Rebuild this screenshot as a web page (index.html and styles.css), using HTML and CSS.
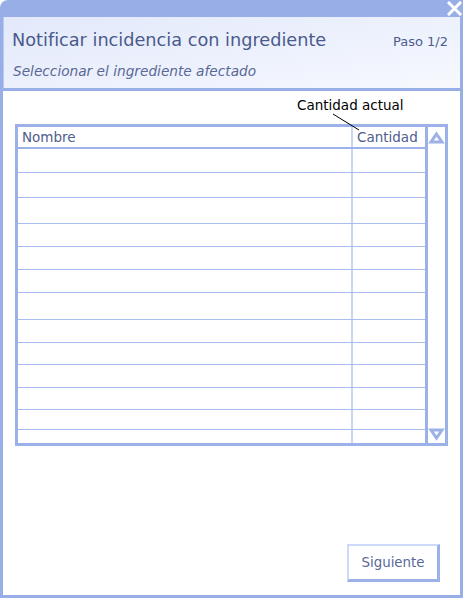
FILE: index.html
```html
<!DOCTYPE html>
<html lang="es">
<head>
<meta charset="utf-8">
<title>Notificar incidencia</title>
<link rel="stylesheet" href="styles.css">
</head>
<body>
<div class="window">
  <svg class="close" width="15" height="15" viewBox="0 0 15 15"><path d="M2 2 L13 13 M13 2 L2 13" stroke="#fff" stroke-width="3" stroke-linecap="square"/></svg>
  <div class="header">
    <div class="header-top">
      <div class="title">Notificar incidencia con ingrediente</div>
      <div class="step">Paso 1/2</div>
    </div>
    <div class="subtitle">Seleccionar el ingrediente afectado</div>
  </div>
  <div class="content">
    <div class="callout">Cantidad actual</div>
    <svg class="leader" width="30" height="20" viewBox="0 0 30 20"><line x1="1" y1="1" x2="27" y2="17" stroke="#000" stroke-width="1"/></svg>
    <div class="table">
      <div class="grid">
        <div class="row head">
          <div class="cell name">Nombre</div>
          <div class="cell qty">Cantidad</div>
        </div>
        <div class="row"><div class="cell name"></div><div class="cell qty"></div></div>
        <div class="row"><div class="cell name"></div><div class="cell qty"></div></div>
        <div class="row"><div class="cell name"></div><div class="cell qty"></div></div>
        <div class="row"><div class="cell name"></div><div class="cell qty"></div></div>
        <div class="row"><div class="cell name"></div><div class="cell qty"></div></div>
        <div class="row"><div class="cell name"></div><div class="cell qty"></div></div>
        <div class="row"><div class="cell name"></div><div class="cell qty"></div></div>
        <div class="row"><div class="cell name"></div><div class="cell qty"></div></div>
        <div class="row"><div class="cell name"></div><div class="cell qty"></div></div>
        <div class="row"><div class="cell name"></div><div class="cell qty"></div></div>
        <div class="row"><div class="cell name"></div><div class="cell qty"></div></div>
        <div class="row"><div class="cell name"></div><div class="cell qty"></div></div>
        <div class="row last"><div class="cell name"></div><div class="cell qty"></div></div>
      </div>
      <div class="scroll">
        <svg width="17" height="17" viewBox="0 0 17 17"><polygon points="8.5,5 14,13 3,13" fill="#fff" stroke="#9cb1e8" stroke-width="3" stroke-linejoin="miter"/></svg>
        <svg width="17" height="16" viewBox="0 0 17 16"><polygon points="3,3 14,3 8.5,11" fill="#fff" stroke="#9cb1e8" stroke-width="3" stroke-linejoin="miter"/></svg>
      </div>
    </div>
    <button class="next" type="button">Siguiente</button>
  </div>
</div>
</body>
</html>
```

FILE: styles.css
```css
html, body {
  margin: 0;
  padding: 0;
  background: #fff;
}

body {
  width: 465px;
  height: 600px;
  font-family: "DejaVu Sans", "Liberation Sans", sans-serif;
}

.window {
  position: relative;
  box-sizing: border-box;
  width: 463px;
  height: 598px;
  background: #98aee6;
  border-radius: 8px 0 0 0;
  padding: 17px 3px 3px 3px;
  display: flex;
  flex-direction: column;
}

.close {
  position: absolute;
  top: 1px;
  right: 1px;
}

.header {
  box-sizing: border-box;
  height: 71px;
  margin-bottom: 3px;
  background: linear-gradient(170deg, #e3e9fb 0%, #eef2fd 60%, #f7f9fe 100%);
  border-left: 1px solid #b9c8f0;
  padding: 12px 12px 0 8px;
}

.header-top {
  display: flex;
  justify-content: space-between;
  align-items: baseline;
}

.title {
  font-size: 17.7px;
  color: #4a5a8b;
  line-height: 22px;
}

.step {
  font-size: 13px;
  color: #4e5d8d;
}

.subtitle {
  margin-top: 11px;
  font-size: 13.7px;
  font-style: italic;
  color: #5a6896;
  line-height: 18px;
  padding-left: 1px;
}

.content {
  position: relative;
  flex: 1;
  background: #fff;
  display: flex;
  flex-direction: column;
  padding-left: 12px;
}

.callout {
  box-sizing: border-box;
  height: 33px;
  padding-top: 5px;
  margin-left: 282px;
  font-size: 13.5px;
  line-height: 18px;
  color: #000;
}

.leader {
  position: absolute;
  left: 329px;
  top: 22px;
}

.table {
  box-sizing: border-box;
  width: 433px;
  height: 322px;
  border: 3px solid #9cb1e8;
  display: flex;
}

.grid {
  width: 407px;
  display: flex;
  flex-direction: column;
}

.row {
  box-sizing: border-box;
  display: flex;
  border-bottom: 1px solid #a9bcef;
  height: 23px;
}

.row.head {
  height: 22px;
  border-bottom: 2px solid #9cb1e8;
}

.row:nth-child(2) { height: 24px; }
.row:nth-child(3) { height: 25px; }
.row:nth-child(4) { height: 26px; }
.row:nth-child(8) { height: 27px; }
.row:nth-child(10) { height: 22px; }
.row:nth-child(12) { height: 22px; }
.row:nth-child(13) { height: 20px; }

.row.last {
  flex: 1;
  border-bottom: none;
}

.cell {
  box-sizing: border-box;
  font-size: 13.5px;
  line-height: 21px;
  color: #4e5d8d;
  padding-left: 4px;
}

.cell.name {
  width: 335px;
  border-right: 2px solid #c8d5f4;
}

.cell.qty {
  flex: 1;
}

.scroll {
  width: 20px;
  box-sizing: border-box;
  border-left: 3px solid #9cb1e8;
  display: flex;
  flex-direction: column;
  justify-content: space-between;
  padding: 2px 0 0 0;
}

.scroll svg {
  display: block;
}

.next {
  margin-top: auto;
  margin-bottom: 13px;
  margin-right: 20px;
  align-self: flex-end;
  box-sizing: border-box;
  width: 93px;
  height: 38px;
  background: #fff;
  border-style: solid;
  border-width: 2px 3px 3px 2px;
  border-color: #cdd9f8 #9cb1e8 #9cb1e8 #cdd9f8;
  font-family: "DejaVu Sans", "Liberation Sans", sans-serif;
  font-size: 13.4px;
  color: #5a6899;
  padding: 0;
}
```
